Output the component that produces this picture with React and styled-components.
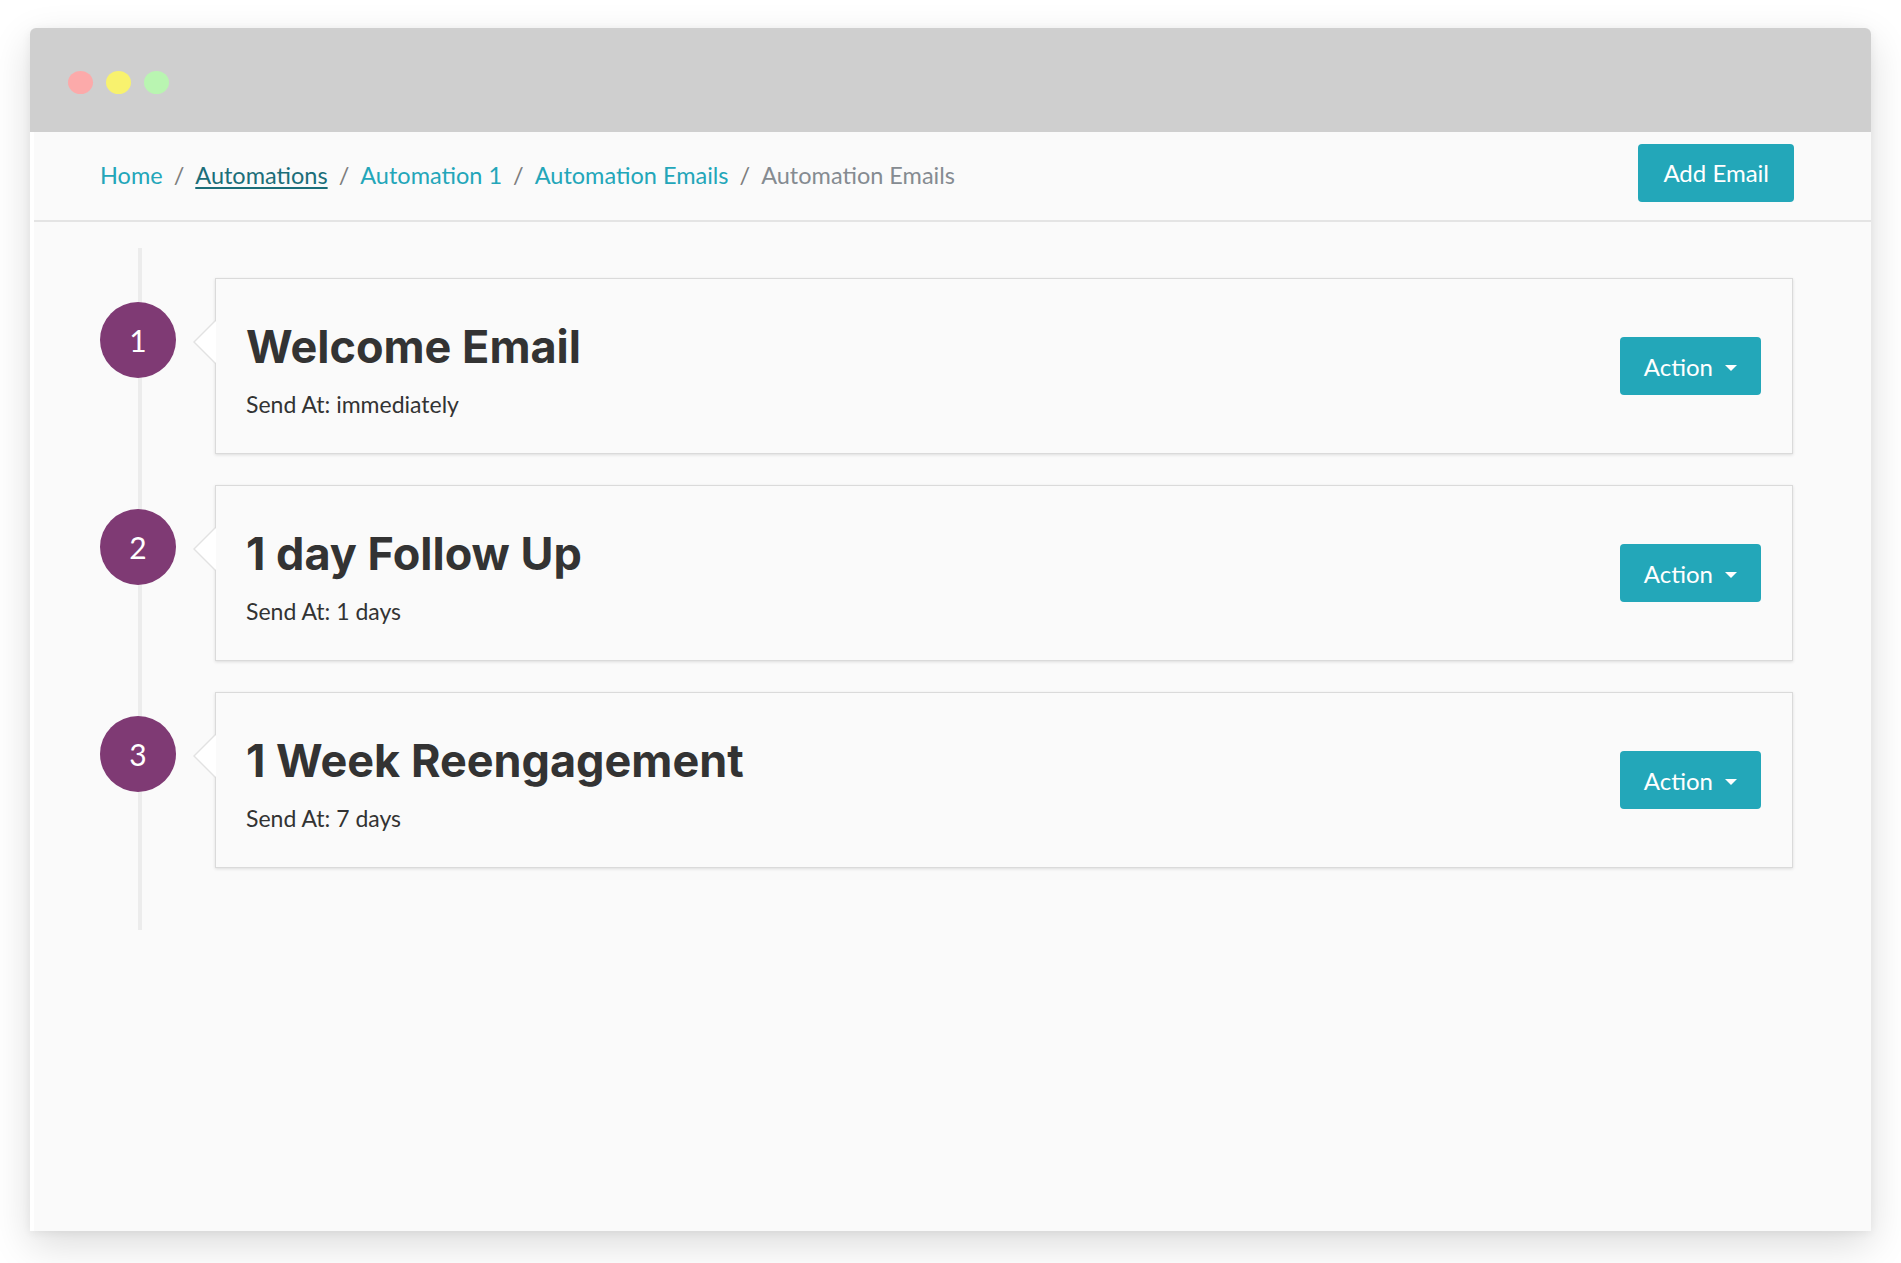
import React from 'react';
import styled, { createGlobalStyle } from 'styled-components';

const GlobalStyle = createGlobalStyle`
  html, body { margin: 0; padding: 0; background: #fff; }
  body { font-family: Lato, "Open Sans", sans-serif; color: #333; }
  * { box-sizing: border-box; }
`;

const Stage = styled.div`
  padding: 28px 0 0 30px;
  height: 1263px;
`;

const Window = styled.div`
  width: 1841px;
  height: 1203px;
  display: flex;
  flex-direction: column;
  border-radius: 6px 6px 0 0;
  overflow: hidden;
  background: #fafafa;
  box-shadow: 0 14px 40px rgba(0, 0, 0, 0.14), 0 2px 10px rgba(0, 0, 0, 0.06);
`;

const TitleBar = styled.div`
  flex: none;
  height: 104px;
  background: #cfcfcf;
  display: flex;
  align-items: center;
  gap: 13px;
  padding: 4px 0 0 38px;
`;

const Dot = styled.span`
  width: 25px;
  height: 23px;
  border-radius: 50%;
  background: ${(p) => p.$color};
`;

const Body = styled.div`
  flex: 1;
  background: #fafafa;
  border-left: 4px solid #fff;
  display: flex;
  flex-direction: column;
`;

const Header = styled.div`
  flex: none;
  height: 90px;
  display: flex;
  align-items: center;
  justify-content: space-between;
  padding: 0 77px 0 66px;
  border-bottom: 2px solid #e4e4e4;
`;

const Crumbs = styled.ol`
  list-style: none;
  margin: -2px 0 0;
  padding: 0;
  display: flex;
  align-items: baseline;
  font-size: 23.5px;
`;

const Crumb = styled.li`
  display: flex;
  align-items: baseline;
  color: ${(p) => (p.$active ? '#858b91' : '#23a6b9')};
  &:not(:first-child)::before {
    content: '/';
    color: #7d7d7d;
    padding: 0 11px;
  }
`;

const CrumbLink = styled.a`
  color: ${(p) => (p.$hover ? '#1b6e79' : '#23a6b9')};
  text-decoration: ${(p) => (p.$hover ? 'underline' : 'none')};
  text-underline-offset: 3px;
  cursor: pointer;
`;

const PrimaryButton = styled.button`
  height: 58px;
  padding: 0 ${(p) => (p.$compact ? '24px' : '25px')};
  border: none;
  border-radius: 4px;
  background: #23a7b9;
  color: #fff;
  font-family: Lato, "Open Sans", sans-serif;
  font-size: 24px;
  margin-bottom: ${(p) => (p.$compact ? '0' : '7px')};
  display: inline-flex;
  align-items: center;
  gap: 12px;
  cursor: pointer;
`;

const Timeline = styled.div`
  margin: 26px 0 0 104px;
  border-left: 4px solid #ececec;
  padding: 30px 78px 62px 0;
  display: flex;
  flex-direction: column;
  gap: 31px;
`;

const Row = styled.div`
  display: flex;
  align-items: flex-start;
`;

const Step = styled.div`
  flex: none;
  width: 76px;
  height: 76px;
  margin: 24px 0 0 -42px;
  border-radius: 50%;
  background: #7f3a74;
  color: #fff;
  font-size: 30px;
  display: flex;
  align-items: center;
  justify-content: center;
`;

const Card = styled.div`
  flex: 1;
  position: relative;
  height: 176px;
  margin-left: 39px;
  background: #fafafa;
  border: 1px solid #dadada;
  box-shadow: 0 1px 3px rgba(0, 0, 0, 0.12);
  display: flex;
  align-items: center;
  justify-content: space-between;
  padding: 0 31px 0 30px;
  &::before {
    content: '';
    position: absolute;
    left: -23px;
    top: 41px;
    border-top: 22px solid transparent;
    border-bottom: 22px solid transparent;
    border-right: 22px solid #e2e2e2;
  }
  &::after {
    content: '';
    position: absolute;
    left: -21px;
    top: 42px;
    border-top: 21px solid transparent;
    border-bottom: 21px solid transparent;
    border-right: 21px solid #fff;
  }
`;

const Info = styled.div`
  align-self: flex-start;
  margin-top: 43px;
`;

const Title = styled.h2`
  margin: 0;
  font-family: Inter, "DejaVu Sans", sans-serif;
  font-weight: 700;
  font-size: 45px;
  line-height: 50px;
  color: #333;
`;

const Sub = styled.div`
  margin-top: 17px;
  font-size: 23px;
  line-height: 30px;
  color: #333;
`;

const Caret = styled.span`
  width: 0;
  height: 0;
  margin-top: 4px;
  border-top: 6px solid #fff;
  border-left: 6px solid transparent;
  border-right: 6px solid transparent;
`;

const emails = [
  { n: 1, title: 'Welcome Email', at: 'immediately' },
  { n: 2, title: '1 day Follow Up', at: '1 days' },
  { n: 3, title: '1 Week Reengagement', at: '7 days' },
];

export default function App() {
  return (
    <Stage>
      <GlobalStyle />
      <Window>
        <TitleBar>
          <Dot $color="#fcaaaa" />
          <Dot $color="#f8f26e" />
          <Dot $color="#b9f5b1" />
        </TitleBar>
        <Body>
          <Header>
            <Crumbs>
              <Crumb><CrumbLink>Home</CrumbLink></Crumb>
              <Crumb><CrumbLink $hover>Automations</CrumbLink></Crumb>
              <Crumb><CrumbLink>Automation 1</CrumbLink></Crumb>
              <Crumb><CrumbLink>Automation Emails</CrumbLink></Crumb>
              <Crumb $active>Automation Emails</Crumb>
            </Crumbs>
            <PrimaryButton>Add Email</PrimaryButton>
          </Header>
          <Timeline>
            {emails.map((e) => (
              <Row key={e.n}>
                <Step>{e.n}</Step>
                <Card>
                  <Info>
                    <Title>{e.title}</Title>
                    <Sub>Send At: {e.at}</Sub>
                  </Info>
                  <PrimaryButton $compact>
                    Action <Caret />
                  </PrimaryButton>
                </Card>
              </Row>
            ))}
          </Timeline>
        </Body>
      </Window>
    </Stage>
  );
}
